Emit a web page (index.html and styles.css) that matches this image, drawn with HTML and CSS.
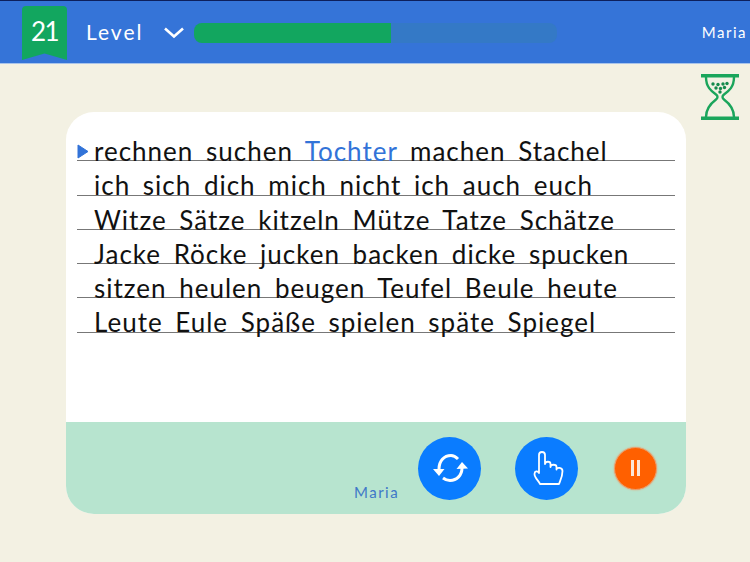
FILE: index.html
```html
<!DOCTYPE html>
<html lang="de">
<head>
  <meta charset="UTF-8" />
  <title>Level 21</title>
  <link rel="stylesheet" href="styles.css">
</head>
<body>
  <header class="topbar">
    <div class="badge">21</div>
    <span class="level">Level</span>
    <svg class="chevron" width="22" height="12" viewBox="0 0 22 12"><path d="M2 1.500 L11 9.500 L20 1.500" fill="none" stroke="#fff" stroke-width="2.600"/></svg>
    <div class="progress"><div class="progress-fill"></div></div>
    <span class="user">Maria</span>
  </header>

  <main class="stage">
    <section class="card">
      <div class="lines">
        <p class="line"><svg class="marker" width="12" height="15" viewBox="0 0 12 15"><path d="M1 1 L11 7.500 L1 14 Z" fill="#3273d8" stroke="#3273d8" stroke-linejoin="round"/></svg>rechnen suchen <span class="current">Tochter</span> machen Stachel</p>
        <p class="line">ich sich dich mich nicht ich auch euch</p>
        <p class="line">Witze Sätze kitzeln Mütze Tatze Schätze</p>
        <p class="line">Jacke Röcke jucken backen dicke spucken</p>
        <p class="line">sitzen heulen beugen Teufel Beule heute</p>
        <p class="line">Leute Eule Späße spielen späte Spiegel</p>
      </div>
      <div class="controls">
        <span class="reader">Maria</span>
        <button class="round-btn">
          <svg width="38" height="38" viewBox="0 0 38 38" fill="none">
            <path d="M8 20 C8 12 13 6.500 20 6.500 C23 6.500 25 8 27 10" stroke="#fff" stroke-width="3"/>
            <path d="M31 19 C31 26 26 31.500 19 31.500 C16 31.500 14 30.500 12 29" stroke="#fff" stroke-width="3"/>
            <path d="M2 20 L13.500 20 L8 27 Z" fill="#fff"/>
            <path d="M25.500 20 L37 19.500 L31 13 Z" fill="#fff"/>
          </svg>
        </button>
        <button class="round-btn hand-btn">
          <svg width="38" height="38" viewBox="0 0 38 38" fill="none">
            <path d="M12 35 C11 32 6.500 29 6.500 25 C6.500 22 9.500 21.500 11 24 L11 6 C11 2 17 2 17 6 L17 15 C17.500 12 22.500 12 22.500 15 L22.500 18 C22.500 15 28.500 15 28.500 18 L28.500 20.500 C28.500 18 34.500 18 34.500 22 C34.500 28 32 32 31 35 Z" stroke="#fff" stroke-width="1.800" stroke-linejoin="round"/>
          </svg>
        </button>
        <button class="pause-btn"><span class="pause-bar"></span><span class="pause-bar"></span></button>
      </div>
    </section>
    <svg class="hourglass" width="38" height="48" viewBox="0 0 38 48" fill="none">
      <path d="M0 1 H38 V4.500 H0 Z M0 43.500 H38 V47 H0 Z" fill="#1aa55b"/>
      <path d="M5 4 C5 14 10 18 15 21.500 C17 23 17 25 15 26.500 C9 31 5 36 5 44 M33 4 C33 14 28 18 23 21.500 C21 23 21 25 23 26.500 C29 31 33 36 33 44" stroke="#1aa55b" stroke-width="2.400"/>
      <g fill="#158a4c">
        <circle cx="12" cy="11" r="1.700"/><circle cx="17" cy="11.500" r="1.700"/><circle cx="22" cy="11" r="1.700"/><circle cx="26" cy="10.500" r="1.700"/>
        <circle cx="15" cy="15" r="1.700"/><circle cx="19.500" cy="15.500" r="1.700"/><circle cx="23.500" cy="14.500" r="1.700"/><circle cx="19" cy="19" r="1.700"/>
      </g>
    </svg>
  </main>
</body>
</html>
```

FILE: styles.css
```css
* {
  box-sizing: border-box;
}
body {
  margin: 0;
  height: 562px;
  overflow: hidden;
  background: #f3f1e3;
  font-family: "Lato", sans-serif;
}
.topbar {
  display: flex;
  align-items: center;
  height: 64px;
  padding: 2px 3px 0 22px;
  background: #3574d8;
  border-top: 1px solid #0d1f5c;
  border-bottom: 1px solid #a9c4ea;
  color: #fff;
}
.badge {
  width: 45px;
  height: 54px;
  padding-top: 9px;
  background: #12a65f;
  border-radius: 4px 4px 0 0;
  clip-path: polygon(0 0, 100% 0, 100% 100%, 50% 88%, 0 100%);
  font-size: 26px;
  letter-spacing: -1.500px;
  text-align: center;
}
.level {
  margin: 0 0 3px 19px;
  font-size: 21px;
  letter-spacing: 2px;
}
.chevron {
  margin-left: 20px;
}
.progress {
  width: 363px;
  height: 20px;
  margin-left: 9px;
  background: #3479c6;
  border-radius: 8px;
}
.progress-fill {
  width: 197px;
  height: 100%;
  background: #12a65f;
  border-radius: 8px 0 0 8px;
}
.user {
  margin-left: auto;
  margin-bottom: 2px;
  font-size: 15px;
  letter-spacing: 1.500px;
}
.stage {
  display: flex;
  align-items: flex-start;
  padding: 9px 0 0 66px;
}
.card {
  width: 620px;
  height: 402px;
  margin-top: 39px;
  display: flex;
  flex-direction: column;
  background: #fff;
  border-radius: 28px;
  overflow: hidden;
}
.lines {
  flex: 1;
  padding: 15px 11px 0;
}
.line {
  position: relative;
  height: 34.300px;
  margin: 0;
  padding: 7px 0 0 17px;
  border-bottom: 1px solid #777;
  font-size: 26px;
  line-height: 34px;
  letter-spacing: 1px;
  word-spacing: 5px;
  color: #111;
  white-space: nowrap;
}
.current {
  color: #3273d8;
}
.marker {
  position: absolute;
  left: 0;
  top: 17px;
}
.controls {
  display: flex;
  align-items: center;
  height: 92px;
  padding-left: 288px;
  background: #b7e4cf;
}
.reader {
  align-self: flex-end;
  margin-bottom: 13px;
  font-size: 15px;
  letter-spacing: 1.500px;
  color: #3f78c8;
}
.round-btn {
  display: flex;
  align-items: center;
  justify-content: center;
  width: 63px;
  height: 63px;
  margin-left: 19px;
  padding: 0;
  background: #0a7cff;
  border: none;
  border-radius: 50%;
}
.hand-btn {
  margin-left: 34px;
}
.pause-btn {
  display: flex;
  align-items: center;
  justify-content: center;
  gap: 3px;
  width: 43px;
  height: 43px;
  margin-left: 36px;
  padding: 0;
  background: #ff6000;
  border: 1px solid #e8a070;
  border-radius: 50%;
  box-shadow: 0 0 2px #e8a070;
}
.pause-bar {
  width: 3px;
  height: 16px;
  background: #fbe6d8;
}
.hourglass {
  margin-left: 15px;
}
```
